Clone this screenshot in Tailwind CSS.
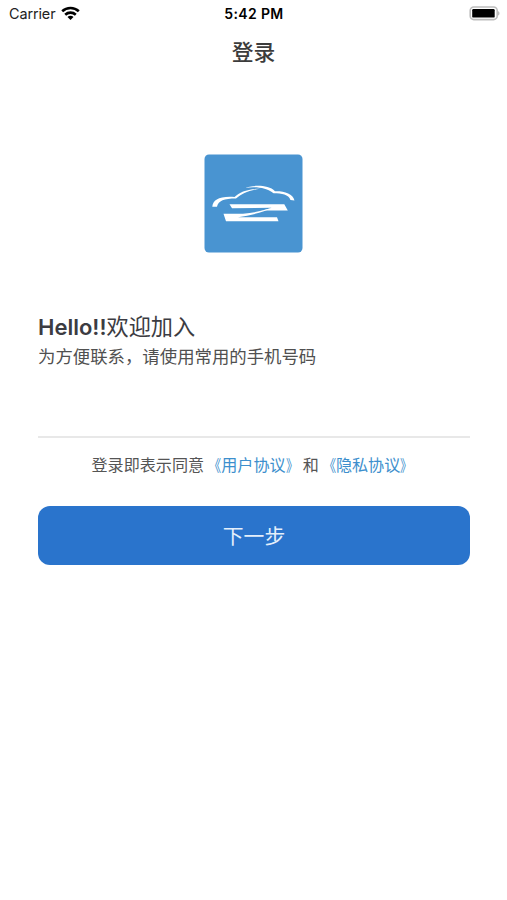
<!DOCTYPE html>
<html lang="zh-CN">
<head>
  <meta charset="UTF-8" />
  <meta name="viewport" content="width=device-width, initial-scale=1.0"/>
  <title>登录</title>
  <script src="https://cdn.jsdelivr.net/npm/@tailwindcss/browser@4"></script>
</head>
<body class="min-h-screen overflow-hidden bg-white font-['Inter','Noto_Sans_CJK_SC',sans-serif] text-[#3c3c42]">

  <!-- Status bar -->
  <div class="grid h-7 grid-cols-3 items-center pr-[7px] pl-[9px] text-black">
    <div class="flex items-center gap-1.5">
      <span class="text-[14.4px] leading-7 tracking-[-0.1px] text-[#222]">Carrier</span>
      <svg class="-mt-0.5 h-[14px] w-[19px]" viewBox="0 0 19 14" fill="none" stroke="currentColor" stroke-width="2.6">
        <path d="M1.2 5.3C5.8.9 13.2.9 17.8 5.3" />
        <path d="M4.2 8.7c3-2.8 7.6-2.8 10.6 0" />
        <path d="M9.5 14 6.5 11c1.6-1.6 4.4-1.6 6 0z" fill="currentColor" stroke="none" />
      </svg>
    </div>
    <span class="-ml-px text-center text-[14px] leading-7 font-semibold tracking-[0.35px]">5:42 PM</span>
    <svg class="h-4 w-[31px] justify-self-end" viewBox="0 0 31 16">
      <rect x="1.2" y="1" width="27" height="12.6" rx="3.6" fill="#fff" stroke="#bdbdbd" stroke-width="1.6" />
      <rect x="3.2" y="3" width="22.5" height="8.6" rx="1.2" fill="#000" />
      <path d="M29 5.2c2 .7 2 3.6 0 4.3z" fill="#bdbdbd" />
    </svg>
  </div>

  <!-- Nav title -->
  <header class="flex h-12 items-center justify-center pt-0.5">
    <h1 class="text-[21.8px] leading-none font-medium text-[#3c3c3c]">登录</h1>
  </header>

  <main class="pt-[78px] pr-[37px] pl-[38px]">
    <!-- Logo -->
    <svg class="ml-[166px] size-[99px]" viewBox="0 0 99 99">
      <rect x=".5" y=".5" width="98" height="98" rx="4.5" fill="#4994d1" />
      <g fill="#fff">
        <path d="M8.3 52.7C9 46 15 42 30.5 43C36 38 43 34.8 56 34.8C44 36.6 38 39.5 32 44.5C20 44.5 14.5 46.5 13 52.7z" />
        <path d="M41 33.8C47 31.5 64 29.8 71 37.3C80 37 89 39.5 90.5 46.5L86.5 46C84.5 40.5 78 39.3 69.5 39.3C62 33.4 52 32.4 41 33.8z" />
        <path d="M25.5 50.2H80.3L83.8 56.6H57C61 55.6 65 54.8 67.5 53.7L28 54.2z" />
        <path d="M19.5 59.8H39C50 58.6 60 56.6 67 54C61 58.2 47 61 34 63.2H73L74.5 67.2H22z" />
      </g>
    </svg>

    <h2 class="mt-[61px] text-[22px] leading-[26px] font-normal"><span class="font-semibold">Hello!!</span><span class="text-[22.2px]">欢迎加入</span></h2>
    <p class="mt-[5px] text-[17.4px] leading-6 whitespace-nowrap text-[#505050]">为方便联系，请使用常用的手机号码</p>

    <!-- Phone number -->
    <input type="tel" class="mt-6 block h-[45px] w-full border-b-2 border-[#e8e8e8] bg-transparent outline-none" />

    <p class="mt-[15px] flex pl-[53.5px] text-[16.1px] leading-6 whitespace-nowrap text-[#555]">
      <span>登录即表示同意</span>
      <a class="ml-px flex text-[#3d8fcd]"><span class="origin-right scale-x-80">《</span>用户协议<span class="origin-left scale-x-75">》</span></a>
      <span class="mr-px ml-px">和</span>
      <a class="flex text-[#3d8fcd]"><span class="origin-right scale-x-80">《</span>隐私协议<span class="origin-left scale-x-75">》</span></a>
    </p>

    <button class="mt-[29px] block h-[59px] w-full rounded-xl bg-[#2a74cc] pt-1 text-[20.8px] leading-none text-[#e4effb]">下一步</button>
  </main>
</body>
</html>
